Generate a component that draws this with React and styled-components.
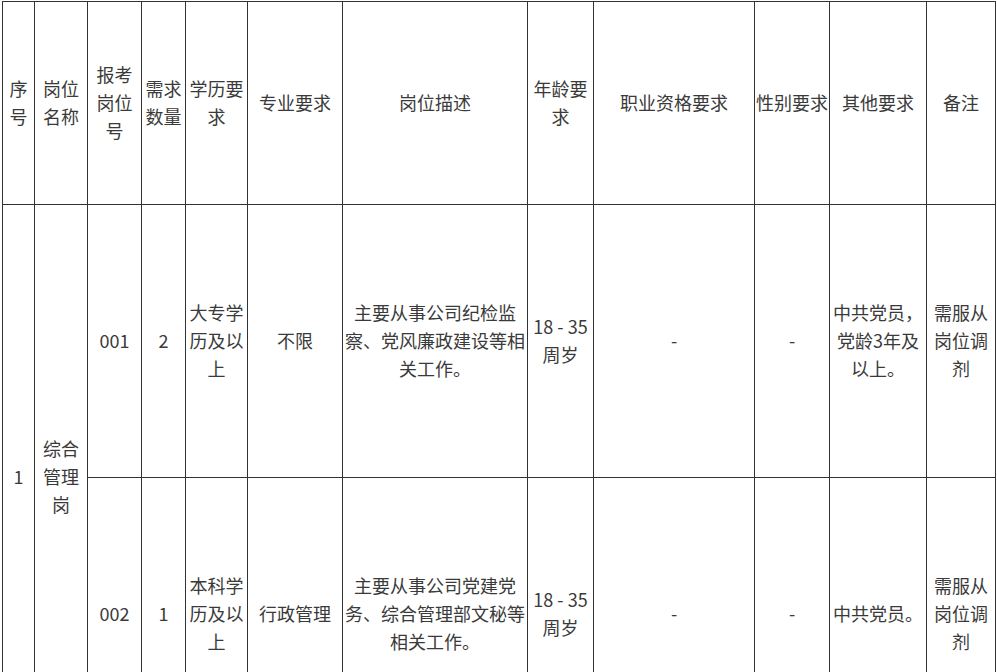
import React from 'react';
import styled, { createGlobalStyle } from 'styled-components';

const GlobalStyle = createGlobalStyle`
  html, body {
    margin: 0;
    padding: 0;
    background: #fff;
  }
  body {
    font-family: "Noto Sans CJK SC", "Noto Sans", sans-serif;
    color: #3a3a3a;
  }
`;

const Page = styled.div`
  padding: 1px 0 0 2px;
`;

const Table = styled.table`
  table-layout: fixed;
  width: 994px;
  border-collapse: separate;
  border-spacing: 0;
  border-top: 1px solid #333;
  border-left: 1px solid #333;
  font-size: 18px;
  line-height: 28px;
`;

const Col = styled.col`
  width: ${(p) => p.$w}px;
`;

const Row = styled.tr`
  height: ${(p) => p.$h}px;
`;

const Cell = styled.td`
  box-sizing: border-box;
  padding: 0 1px 3px;
  border-right: 1px solid #333;
  border-bottom: 1px solid #333;
  text-align: center;
  vertical-align: middle;
  font-weight: 400;
  word-break: normal;
`;

const widths = [32, 53, 54, 44, 62, 95, 185, 66, 161, 75, 97, 69];

const headers = [
  '序号',
  '岗位名称',
  '报考岗位号',
  '需求数量',
  '学历要求',
  '专业要求',
  '岗位描述',
  '年龄要求',
  '职业资格要求',
  '性别要求',
  '其他要求',
  '备注',
];

const jobs = [
  {
    code: '001',
    count: '2',
    edu: '大专学历及以上',
    major: '不限',
    desc: '主要从事公司纪检监察、党风廉政建设等相关工作。',
    age: '18 - 35周岁',
    cert: '-',
    gender: '-',
    other: '中共党员，党龄3年及以上。',
    note: '需服从岗位调剂',
  },
  {
    code: '002',
    count: '1',
    edu: '本科学历及以上',
    major: '行政管理',
    desc: '主要从事公司党建党务、综合管理部文秘等相关工作。',
    age: '18 - 35周岁',
    cert: '-',
    gender: '-',
    other: '中共党员。',
    note: '需服从岗位调剂',
  },
];

export default function App() {
  return (
    <Page>
      <GlobalStyle />
      <Table>
        <colgroup>
          {widths.map((w, i) => (
            <Col key={i} $w={w} />
          ))}
        </colgroup>
        <tbody>
          <Row $h={203}>
            {headers.map((h) => (
              <Cell key={h}>{h}</Cell>
            ))}
          </Row>
          {jobs.map((job, i) => (
            <Row key={job.code} $h={273}>
              {i === 0 && (
                <>
                  <Cell rowSpan={jobs.length}>1</Cell>
                  <Cell rowSpan={jobs.length}>综合管理岗</Cell>
                </>
              )}
              <Cell>{job.code}</Cell>
              <Cell>{job.count}</Cell>
              <Cell>{job.edu}</Cell>
              <Cell>{job.major}</Cell>
              <Cell>{job.desc}</Cell>
              <Cell>{job.age}</Cell>
              <Cell>{job.cert}</Cell>
              <Cell>{job.gender}</Cell>
              <Cell>{job.other}</Cell>
              <Cell>{job.note}</Cell>
            </Row>
          ))}
        </tbody>
      </Table>
    </Page>
  );
}
